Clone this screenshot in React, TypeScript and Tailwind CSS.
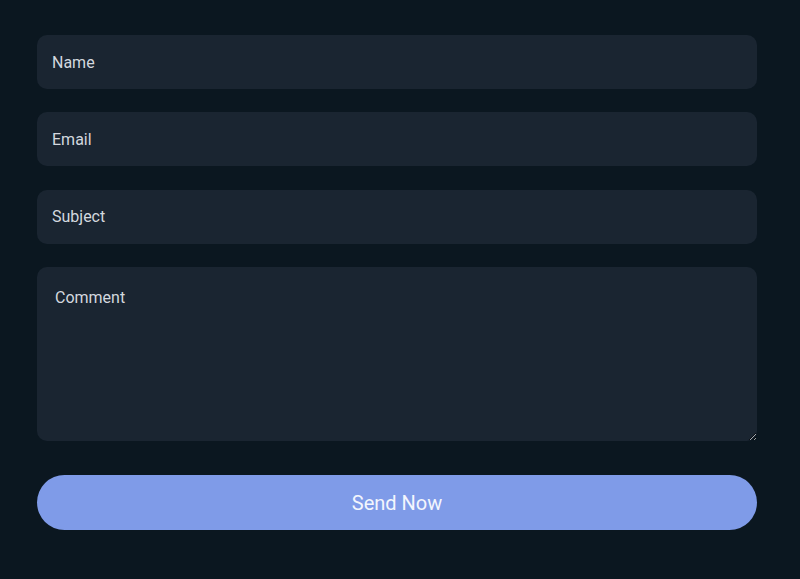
import React from "react";

export default function App() {
  const font = { fontFamily: "Roboto, 'Noto Sans', sans-serif" };
  return (
    <div className="min-h-[579px] w-[800px] bg-[#0b1720] pl-[37px] pt-[35px]" style={font}>
      <form className="flex w-[720px] flex-col gap-[23.3px]" onSubmit={(e) => e.preventDefault()}>
        <input
          placeholder="Name"
          className="h-[54px] w-full rounded-[10px] bg-[#1a2531] px-[15px] text-[16px] text-[#d3d8df] placeholder-[#d3d8df] outline-none"
        />
        <input
          placeholder="Email"
          className="h-[54px] w-full rounded-[10px] bg-[#1a2531] px-[15px] text-[16px] text-[#d3d8df] placeholder-[#d3d8df] outline-none"
        />
        <input
          placeholder="Subject"
          className="h-[54px] w-full rounded-[10px] bg-[#1a2531] px-[15px] text-[16px] text-[#d3d8df] placeholder-[#d3d8df] outline-none"
        />
        <textarea
          placeholder="Comment"
          className="h-[174px] w-full rounded-[10px] bg-[#1a2531] px-[18px] pt-[19px] text-[16px] text-[#d3d8df] placeholder-[#d3d8df] outline-none"
        />
        <button
          type="submit"
          className="mt-[11px] h-[55px] w-full rounded-full bg-[#7f9be8] text-[20px] text-[#f3f6fd]"
        >
          Send Now
        </button>
      </form>
    </div>
  );
}
